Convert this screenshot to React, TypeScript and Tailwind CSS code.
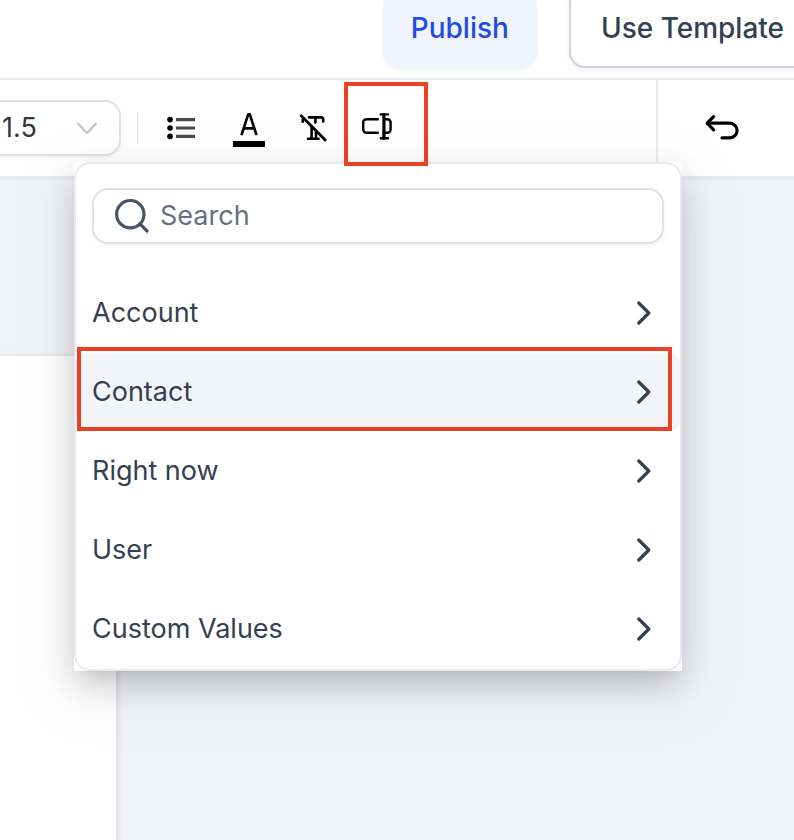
import type { ReactNode } from 'react';

interface ToolButtonProps {
  label: string;
  wide?: boolean;
  children: ReactNode;
}

const menuItems = [
  { id: 'account', label: 'Account', active: false },
  { id: 'contact', label: 'Contact', active: true },
  { id: 'right-now', label: 'Right now', active: false },
  { id: 'user', label: 'User', active: false },
  { id: 'custom-values', label: 'Custom Values', active: false },
];

function ToolButton({ label, wide = false, children }: ToolButtonProps) {
  return (
    <button
      type="button"
      aria-label={label}
      className={`flex h-10 shrink-0 items-center justify-start text-black ${wide ? 'w-9' : 'w-8'}`}
    >
      {children}
    </button>
  );
}

function ListIcon() {
  return (
    <svg className="h-10 w-8" viewBox="0 0 32 40" fill="none">
      <g fill="#000">
        <circle cx="5" cy="11.6" r="2.8" />
        <circle cx="5" cy="20" r="2.8" />
        <circle cx="5" cy="28.4" r="2.8" />
      </g>
      <path d="M11 11.6h19M11 20h19M11 28.4h19" stroke="#4a4a4a" strokeWidth="3.2" />
    </svg>
  );
}

function TextColorIcon() {
  return (
    <svg className="h-10 w-8" viewBox="0 0 32 40" fill="none">
      <path
        d="M8.8 26 15.2 6.4h1.6L23.2 26M10.8 20.4h10.4"
        stroke="#000"
        strokeWidth="2.6"
        strokeLinecap="round"
        strokeLinejoin="round"
      />
      <path d="M0 33h32v6H0z" fill="#000" />
    </svg>
  );
}

function ClearFormatIcon() {
  return (
    <svg className="h-10 w-8" viewBox="0 0 32 40" fill="none" stroke="#000" strokeLinecap="round" strokeLinejoin="round">
      <path d="M12 9.4h12q2.2 0 2.2 2.4v1.6" strokeWidth="2.6" />
      <path d="M5.8 11.5v2.2M18.4 10v4.4M14.6 18.5v11.7M19 23.5v6.7M11 30.8h10.6" strokeWidth="2.6" />
      <path d="M4.2 7.8 28.2 32" strokeWidth="2.8" />
    </svg>
  );
}

function CustomFieldIcon() {
  return (
    <svg className="h-10 w-8" viewBox="0 0 32 40" fill="none" stroke="#000" strokeWidth="2.4" strokeLinecap="round">
      <path d="M16.8 11.2H6q-3.8 0-3.8 3.8v6q0 3.8 3.8 3.8h10.8" />
      <path d="M19.7 6.4h7.2M19.7 30.2h7.2" />
      <path d="M22.9 6.5v23.7" strokeWidth="3.2" />
      <path d="M24.5 11.2h1.5q3.6 0 3.6 3.8v6q0 3.8-3.6 3.8h-1.5" />
    </svg>
  );
}

function UndoIcon() {
  return (
    <svg
      className="h-10 w-9"
      viewBox="0 0 36 40"
      fill="none"
      stroke="#000"
      strokeWidth="3.2"
      strokeLinecap="round"
      strokeLinejoin="round"
    >
      <path d="M9.6 8.6 3.2 15.2 9.6 21.8" />
      <path d="M3.6 15.2h22.2a7.3 7.3 0 0 1 0 14.6H18" />
    </svg>
  );
}

function SearchIcon() {
  return (
    <svg className="h-9 w-9" viewBox="0 0 36 36" fill="none" stroke="#475467" strokeWidth="3.2" strokeLinecap="round">
      <circle cx="16.3" cy="16.2" r="13.7" />
      <path d="M26.2 26.2 33 33" />
    </svg>
  );
}

function ChevronRight() {
  return (
    <svg
      className="h-6 w-4"
      viewBox="0 0 16 24"
      fill="none"
      stroke="#344054"
      strokeWidth="3.2"
      strokeLinecap="round"
      strokeLinejoin="round"
    >
      <path d="M2.8 2 12.8 12 2.8 22" />
    </svg>
  );
}

function Header() {
  return (
    <header className="flex h-20 items-start justify-end overflow-hidden border-b-2 border-[#e9eaef] bg-white text-[28px]">
      <div className="-mt-3 -mr-[22px] flex shrink-0 gap-8">
        <button
          type="button"
          className="h-20 rounded-2xl bg-[#eff4ff] px-7 font-medium text-[#1f4be3] shadow-[0_2px_4px_rgba(16,24,40,0.06)]"
        >
          Publish
        </button>
        <button
          type="button"
          className="h-20 rounded-2xl border-2 border-[#d0d5dd] bg-white px-[30px] font-medium whitespace-nowrap text-[#344054] shadow-[0_2px_4px_rgba(16,24,40,0.06)]"
        >
          Use Template
        </button>
      </div>
    </header>
  );
}

function CustomFieldMenu() {
  return (
    <div className="absolute top-[82px] left-[74px] z-10 w-[608px] bg-white/60 shadow-[0_6px_12px_-8px_rgba(0,0,0,0.12),0_12px_32px_0_rgba(0,0,0,0.08),0_18px_56px_16px_rgba(0,0,0,0.05),0_16px_32px_-8px_rgba(0,0,0,0.14)]">
      <div className="rounded-2xl border-2 border-[#e9e9ef] bg-white pt-6 pb-[2px]">
        <label className="mx-4 flex h-14 items-center gap-[10px] rounded-2xl border-2 border-[#e0e0e6] bg-white px-5 shadow-[0_2px_4px_rgba(16,24,40,0.05)]">
          <SearchIcon />
          <input
            type="text"
            aria-label="Search"
            placeholder="Search"
            className="min-w-0 flex-1 bg-transparent text-[#344054] outline-none placeholder:text-[#667085]"
          />
        </label>
        <ul className="mt-[31px] flex flex-col gap-[3px]">
          {menuItems.map((item) => (
            <li key={item.id} className="relative">
              <button
                type="button"
                className={`flex h-19 w-full items-center justify-between rounded-lg pr-7 pl-4 text-left text-[#344054] ${
                  item.active ? 'bg-[#f2f4f7]' : ''
                }`}
              >
                {item.label}
                <ChevronRight />
              </button>
              {item.active && (
                <span className="pointer-events-none absolute -top-[7px] right-2 -bottom-px left-px border-4 border-[#eb4026]" />
              )}
            </li>
          ))}
        </ul>
      </div>
    </div>
  );
}

function Toolbar() {
  return (
    <div className="relative flex h-[100px] border-b-4 border-[#e9eaee] bg-white">
      <div className="flex flex-1 items-center">
        <div className="relative -ml-4 shrink-0">
          <select
            aria-label="Line height"
            defaultValue="1.5"
            className="h-14 w-[137px] appearance-none rounded-2xl border-2 border-[#e0e0e6] bg-white pl-4 text-[#333639] shadow-[0_2px_4px_rgba(16,24,40,0.05)]"
          >
            <option>1.0</option>
            <option>1.5</option>
            <option>2.0</option>
          </select>
          <svg
            className="pointer-events-none absolute top-5 right-6 h-4 w-5"
            viewBox="0 0 20 16"
            fill="none"
            stroke="#c2c2c2"
            strokeWidth="2"
            strokeLinecap="round"
            strokeLinejoin="round"
          >
            <path d="M.9 3.5 10 13l9.1-9.5" />
          </svg>
        </div>
        <div className="ml-4 h-8 w-px shrink-0 bg-[#e0e0e6]" />
        <div className="ml-[27px] flex gap-8">
          <ToolButton label="Bulleted list" wide>
            <ListIcon />
          </ToolButton>
          <ToolButton label="Text color">
            <TextColorIcon />
          </ToolButton>
          <ToolButton label="Clear formatting">
            <ClearFormatIcon />
          </ToolButton>
          <div className="relative">
            <ToolButton label="Custom fields">
              <CustomFieldIcon />
            </ToolButton>
            <span className="pointer-events-none absolute -top-[26px] -left-[17px] z-20 h-[84px] w-[84px] border-4 border-[#eb4026]" />
          </div>
        </div>
      </div>
      <div className="flex w-[138px] shrink-0 items-center border-l-2 border-[#e9eaef] pl-[46px]">
        <button type="button" aria-label="Undo">
          <UndoIcon />
        </button>
      </div>
      <CustomFieldMenu />
    </div>
  );
}

export default function App() {
  return (
    <div className="flex min-h-screen flex-col overflow-hidden bg-[#f2f3f7] font-['Inter',sans-serif] text-[27px] leading-9">
      <Header />
      <Toolbar />
      <main className="flex flex-1 pt-44">
        <div className="w-[116px] bg-white shadow-[0_2px_8px_rgba(0,0,0,0.15)]" />
      </main>
    </div>
  );
}
